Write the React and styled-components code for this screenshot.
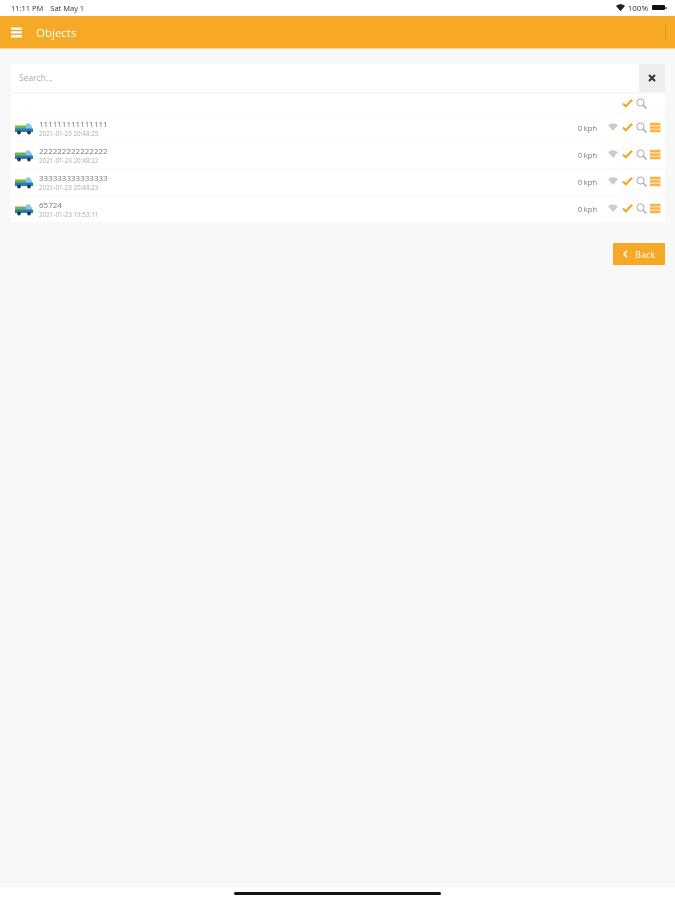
import React from "react";
import styled, { createGlobalStyle } from "styled-components";

const GlobalStyle = createGlobalStyle`
  html, body {
    margin: 0;
    padding: 0;
    background: #f8f8f8;
  }
  body {
    font-family: "Open Sans", "Liberation Sans", sans-serif;
  }
`;

const Page = styled.div`
  width: 675px;
  height: 900px;
  display: flex;
  flex-direction: column;
  overflow: hidden;
  background: #f8f8f8;
  filter: blur(0.6px);
`;

const StatusBar = styled.div`
  height: 16px;
  background: #fff;
  display: flex;
  align-items: center;
  justify-content: space-between;
  padding: 0 10px 1px 11px;
  box-sizing: border-box;
  font-size: 7.5px;
  color: #333;
`;

const StatusGroup = styled.div`
  display: flex;
  align-items: center;
  gap: ${(props) => props.gap || 3}px;
`;

const Percent = styled.span`
  font-size: 8px;
`;

const Battery = styled.div`
  width: 13px;
  height: 5px;
  background: #111;
  border-radius: 1px;
  margin-left: 1px;
  position: relative;

  &::after {
    content: "";
    position: absolute;
    right: -2px;
    top: 1.5px;
    width: 2px;
    height: 2px;
    background: #777;
  }
`;

const Header = styled.div`
  height: 33px;
  background: #f5a926;
  display: flex;
  align-items: center;
  padding: 0 9px 0 11px;
  box-sizing: border-box;
  border-bottom: 1px solid #fbd592;
`;

const Title = styled.div`
  color: #fff;
  font-size: 11.5px;
  margin-left: 14px;
  margin-top: 1px;
  flex: 1;
`;

const HeaderRule = styled.div`
  width: 1px;
  height: 18px;
  background: #e09a20;
`;

const Content = styled.div`
  flex: 1;
  padding: 15px 10px 0 11px;
  display: flex;
  flex-direction: column;
`;

const SearchBar = styled.div`
  height: 28px;
  display: flex;
  background: #fff;
`;

const SearchInput = styled.div`
  flex: 1;
  display: flex;
  align-items: center;
  padding: 0 0 2px 8px;
  box-sizing: border-box;
  font-size: 8.5px;
  color: #aaa;
`;

const ClearButton = styled.div`
  width: 26px;
  background: #eee;
  display: flex;
  align-items: center;
  justify-content: center;
`;

const List = styled.div`
  margin-top: 2px;
  display: flex;
  flex-direction: column;
  gap: 1px;
`;

const Row = styled.div`
  height: ${(props) => (props.tall ? 26 : 20)}px;
  background: #fff;
  display: flex;
  align-items: center;
  padding: 0 4px 0 4px;
  box-sizing: border-box;
`;

const TruckBox = styled.div`
  width: 18px;
  margin-right: 6px;
  display: flex;
`;

const Info = styled.div`
  flex: 1;
  display: flex;
  flex-direction: column;
`;

const Name = styled.div`
  font-size: 8px;
  line-height: 11px;
  color: #777;
`;

const Stamp = styled.div`
  font-size: 6.3px;
  line-height: 9px;
  color: #aaa;
`;

const Speed = styled.div`
  font-size: 7.5px;
  color: #777;
  margin-right: 11px;
`;

const Actions = styled.div`
  display: flex;
  align-items: center;
  gap: 3px;
  margin-top: -2px;
`;

const IconSlot = styled.div`
  width: 11px;
  height: 12px;
  display: flex;
  align-items: center;
  justify-content: flex-start;
`;

const Footer = styled.div`
  margin-top: 21px;
  display: flex;
  justify-content: flex-end;
`;

const BackButton = styled.div`
  width: 52px;
  height: 22px;
  background: #f5a926;
  color: #fff;
  font-size: 9px;
  display: flex;
  align-items: center;
  justify-content: center;
  gap: 7px;
`;

const HomeArea = styled.div`
  height: 13px;
  background: #fff;
  display: flex;
  justify-content: center;
  padding-top: 5px;
  box-sizing: border-box;
`;

const HomeBar = styled.div`
  width: 207px;
  height: 3px;
  border-radius: 2px;
  background: #111;
`;

const Menu = () => (
  <svg width="11" height="11" viewBox="0 0 11 11">
    <path d="M0 0.5h11v2.3H0zM0 4.3h11v2.3H0zM0 8.1h11v2.3H0z" fill="#fff" />
  </svg>
);

const Wifi = ({ color = "#222", size = 9 }) => (
  <svg width={size} height={size * 0.8} viewBox="0 0 12 9.6">
    <path d="M6 9.6 0 2.8C3.5-.7 8.5-.7 12 2.8z" fill={color} />
  </svg>
);

const Close = () => (
  <svg width="8" height="8" viewBox="0 0 8 8">
    <path d="M1 1l6 6M7 1L1 7" stroke="#333" strokeWidth="2" />
  </svg>
);

const Check = () => (
  <svg width="11" height="10" viewBox="0 0 12 10">
    <path d="M1 5.5l3.2 3L11 1.5" fill="none" stroke="#f5a623" strokeWidth="2.4" />
  </svg>
);

const Search = () => (
  <svg width="11" height="11" viewBox="0 0 11 11">
    <circle cx="4.5" cy="4.5" r="3.6" fill="none" stroke="#a8a8a8" strokeWidth="1" />
    <path d="M7.2 7.2l3.3 3.3" stroke="#a8a8a8" strokeWidth="1.4" />
  </svg>
);

const Lines = () => (
  <svg width="10.5" height="11" viewBox="0 0 11 11">
    <path d="M0 .5h11v2.8H0zM0 4.1h11v2.8H0zM0 7.7h11v2.8H0z" fill="#f7b445" />
  </svg>
);

const Truck = () => (
  <svg width="18" height="13" viewBox="0 0 18 13">
    <path d="M0 3.5h11V7H0z" fill="#6cbb45" />
    <path d="M11 1.5h3.8L17 5v2h-6z" fill="#8ec3ea" />
    <path d="M0 6.5h18V10H0z" fill="#2f78bd" />
    <circle cx="4" cy="10.5" r="1.9" fill="#2b3a42" />
    <circle cx="14" cy="10.5" r="1.9" fill="#2b3a42" />
  </svg>
);

const Back = () => (
  <svg width="5" height="8" viewBox="0 0 5 8">
    <path d="M4 .8L1 4l3 3.2" fill="none" stroke="#fff" strokeWidth="1.5" />
  </svg>
);

const objects = [
  { name: "111111111111111", stamp: "2021-01-23 20:48:25" },
  { name: "222222222222222", stamp: "2021-01-23 20:48:22" },
  { name: "333333333333333", stamp: "2021-01-23 20:48:23" },
  { name: "65724", stamp: "2021-01-23 19:53:11" },
];

const App = () => (
  <Page>
    <GlobalStyle />
    <StatusBar>
      <StatusGroup gap={7}>
        <span>11:11 PM</span>
        <span>Sat May 1</span>
      </StatusGroup>
      <StatusGroup>
        <Wifi />
        <Percent>100%</Percent>
        <Battery />
      </StatusGroup>
    </StatusBar>
    <Header>
      <Menu />
      <Title>Objects</Title>
      <HeaderRule />
    </Header>
    <Content>
      <SearchBar>
        <SearchInput>Search...</SearchInput>
        <ClearButton>
          <Close />
        </ClearButton>
      </SearchBar>
      <List>
        <Row>
          <Info />
          <Actions>
            <IconSlot>
              <Check />
            </IconSlot>
            <IconSlot>
              <Search />
            </IconSlot>
            <IconSlot />
          </Actions>
        </Row>
        {objects.map((item) => (
          <Row tall key={item.name}>
            <TruckBox>
              <Truck />
            </TruckBox>
            <Info>
              <Name>{item.name}</Name>
              <Stamp>{item.stamp}</Stamp>
            </Info>
            <Speed>0 kph</Speed>
            <Actions>
              <IconSlot>
                <Wifi color="#ccc" size={10} />
              </IconSlot>
              <IconSlot>
                <Check />
              </IconSlot>
              <IconSlot>
                <Search />
              </IconSlot>
              <IconSlot>
                <Lines />
              </IconSlot>
            </Actions>
          </Row>
        ))}
      </List>
      <Footer>
        <BackButton>
          <Back />
          <span>Back</span>
        </BackButton>
      </Footer>
    </Content>
    <HomeArea>
      <HomeBar />
    </HomeArea>
  </Page>
);

export default App;
